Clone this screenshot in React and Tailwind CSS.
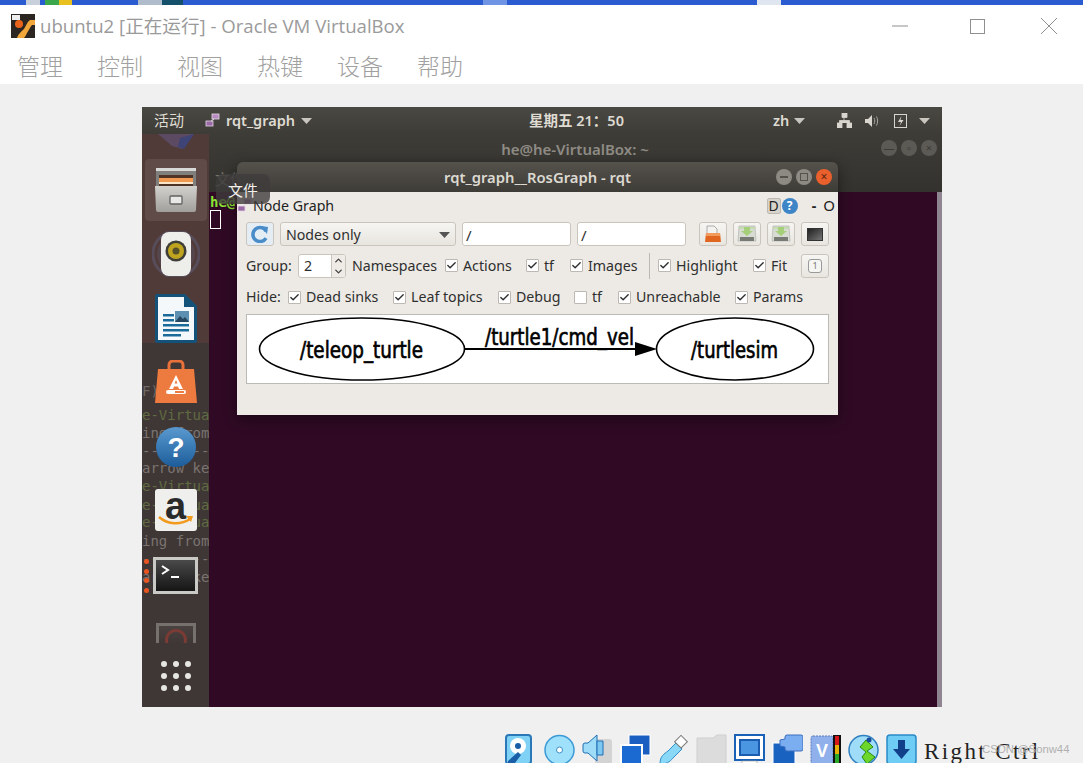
import { Check, ChevronDown, ChevronUp } from "lucide-react";

const ubuntu = "font-['Noto_Sans','Noto_Sans_CJK_SC',sans-serif]";
const mono = "font-['DejaVu_Sans_Mono','Liberation_Mono',monospace]";

const ghostLines = [
  ["F) (E", "text-[#6f6866]", 391],
  ["e-Virtua", "text-[#5f6b42]", 415],
  ["ing from", "text-[#7a7370]", 433],
  ["--------", "text-[#7a7370]", 451],
  ["arrow ke", "text-[#7a7370]", 468],
  ["e-Virtua", "text-[#5f6b42]", 486],
  ["e-Virtua", "text-[#5f6b42]", 505],
  ["e-Virtua", "text-[#5f6b42]", 522],
  ["ing from", "text-[#7a7370]", 541],
  ["--------", "text-[#7a7370]", 559],
  ["arrow ke", "text-[#7a7370]", 577],
];

function WinControls() {
  return (
    <div className="flex items-center gap-[56px] mr-[26px]">
      <svg width="22" height="16" viewBox="0 0 22 16"><path d="M0 8h16" stroke="#8f8f8f" strokeWidth="1" /></svg>
      <div className="w-[15px] h-[15px] border border-[#8f8f8f]" />
      <svg width="16" height="16" viewBox="0 0 16 16"><path d="M0 0l16 16M16 0L0 16" stroke="#8f8f8f" strokeWidth="1" /></svg>
    </div>
  );
}

function VBoxLogo() {
  return (
    <svg width="24" height="24" viewBox="0 0 24 24" className="shrink-0">
      <rect width="24" height="24" fill="#2b2622" />
      <path d="M6 24c1-4 4-6 7-9 2-3 3-7 6-9h5v5h-3c-2 2-3 5-5 8-1 2-2 4-3 5z" fill="#f2a73a" />
      <circle cx="8" cy="10" r="4" fill="#e8641c" />
      <rect x="1" y="1" width="8" height="5" fill="#eee" />
    </svg>
  );
}

function Caret({ color = "#c9c6bf" }) {
  return (
    <svg width="11" height="6" viewBox="0 0 11 6"><path d="M0 0h11L5.500 6z" fill={color} /></svg>
  );
}

function GraphGlyph() {
  return (
    <svg width="15" height="15" viewBox="0 0 15 15">
      <rect x="7" y="1" width="7" height="5" fill="#b78bc0" stroke="#e5d8e8" strokeWidth="0.800" />
      <rect x="1" y="8" width="7" height="5" fill="#9a6aa6" stroke="#e5d8e8" strokeWidth="0.800" />
      <path d="M6 8l3-2" stroke="#ddd" />
    </svg>
  );
}

function TopBar() {
  return (
    <div className={`h-[27px] shrink-0 flex items-center bg-gradient-to-b from-[#4a4843] to-[#3e3c37] text-[14.500px] font-semibold text-[#dfdbd2] ${ubuntu}`}>
      <span className="ml-[12px] w-[30px] text-[15px] font-normal whitespace-nowrap">活动</span>
      <span className="ml-[21px]"><GraphGlyph /></span>
      <span className="ml-[6px] w-[70px] whitespace-nowrap">rqt_graph</span>
      <span className="ml-[5px]"><Caret /></span>
      <span className="ml-[217px] w-[96px] whitespace-nowrap text-[14.500px]">星期五 21：50</span>
      <span className="ml-[148px] w-[16px]">zh</span>
      <span className="ml-[5px]"><Caret /></span>
      <svg className="ml-[32px]" width="15" height="15" viewBox="0 0 15 15">
        <path d="M5 0h5v4.500H5zM0 10h5v5H0zM10 10h5v5h-5zM7 4.500v3M2.500 10V7.500h10V10" fill="#d9d6cf" stroke="#d9d6cf" strokeWidth="0.800" />
      </svg>
      <svg className="ml-[13px]" width="15" height="14" viewBox="0 0 15 14">
        <path d="M0 5h3l4-4v12l-4-4H0z" fill="#d9d6cf" />
        <path d="M9 4c1 2 1 4 0 6M11.500 2.500c1.500 3 1.500 6 0 9" stroke="#a9a6a0" fill="none" />
      </svg>
      <svg className="ml-[14px]" width="13" height="15" viewBox="0 0 13 15">
        <rect x="0.500" y="1.500" width="12" height="13" fill="none" stroke="#d9d6cf" />
        <path d="M7.500 3L4 9h3l-1.500 4L9.500 7h-3z" fill="#d9d6cf" />
      </svg>
      <span className="ml-[12px]"><Caret /></span>
    </div>
  );
}

function DrawerIcon() {
  return (
    <svg width="42" height="44" viewBox="0 0 42 44">
      <defs>
        <linearGradient id="drawerFront" x1="0" y1="0" x2="0" y2="1">
          <stop offset="0" stopColor="#d2d1ce" />
          <stop offset="1" stopColor="#a09f9c" />
        </linearGradient>
      </defs>
      <rect x="1" y="0" width="40" height="20" rx="2" fill="#7f7f7d" />
      <rect x="1" y="0" width="40" height="3" fill="#d8d8d6" />
      <rect x="4" y="7" width="34" height="13" fill="#4f3426" />
      <rect x="4" y="10" width="34" height="6" fill="#ef9a50" />
      <rect x="4" y="14" width="34" height="2" fill="#f9e6c8" />
      <path d="M0 18h42l-1 24a2 2 0 0 1-2 2H3a2 2 0 0 1-2-2z" fill="url(#drawerFront)" />
      <rect x="15" y="28" width="12" height="8" rx="1" fill="#e8e8e6" stroke="#62615f" strokeWidth="1.300" />
    </svg>
  );
}

function SpeakerIcon() {
  return (
    <svg width="48" height="46" viewBox="0 0 48 46">
      <circle cx="24" cy="23" r="23" fill="none" stroke="#5c5870" strokeWidth="3" opacity="0.600" />
      <circle cx="24" cy="23" r="19" fill="#5c5870" opacity="0.400" />
      <rect x="9" y="1" width="30" height="44" rx="8" fill="#eeeeea" />
      <circle cx="24" cy="20" r="10.500" fill="#3f3f38" />
      <circle cx="24" cy="20" r="8" fill="#bfa51f" />
      <circle cx="24" cy="20" r="3.500" fill="#55502a" />
    </svg>
  );
}

function WriterIcon() {
  return (
    <svg width="42" height="49" viewBox="0 0 42 49">
      <path d="M2 0h28l12 12v35a2 2 0 0 1-2 2H2a2 2 0 0 1-2-2V2a2 2 0 0 1 2-2z" fill="#15527a" />
      <path d="M3 3h26l10 10v33H3z" fill="#f5f8fa" />
      <path d="M29 1l12 12H29z" fill="#15527a" />
      <rect x="8" y="20" width="11" height="2.500" fill="#1c6a9a" />
      <rect x="8" y="25" width="11" height="2.500" fill="#1c6a9a" />
      <rect x="8" y="30" width="26" height="2.500" fill="#1c6a9a" />
      <rect x="8" y="35" width="26" height="2.500" fill="#1c6a9a" />
      <rect x="8" y="40" width="18" height="2.500" fill="#1c6a9a" />
      <rect x="20" y="17" width="14" height="11" fill="#5d8fb0" />
      <path d="M20 28l5-6 3 3 2-2 4 5z" fill="#26455e" />
    </svg>
  );
}

function BagIcon() {
  return (
    <svg width="42" height="43" viewBox="0 0 42 43">
      <path d="M14 10V5a4 4 0 0 1 4-4h6a4 4 0 0 1 4 4v5" fill="none" stroke="#e8703a" strokeWidth="3" />
      <path d="M3 9h36l3 34H0z" fill="#ed7a3f" />
      <path d="M21 15l7 14h-4l-1-2.500h-4L18 29h-4zM19.500 23.500h3L21 20z" fill="#fff" fillRule="evenodd" />
      <rect x="11" y="30" width="20" height="4" rx="2" fill="#fff" />
      <rect x="20" y="31" width="9" height="2" fill="#ed7a3f" />
    </svg>
  );
}

function HelpIcon() {
  return (
    <svg width="40" height="40" viewBox="0 0 40 40">
      <defs>
        <linearGradient id="helpBlue" x1="0" y1="0" x2="0" y2="1">
          <stop offset="0" stopColor="#5a9ad0" />
          <stop offset="1" stopColor="#1c5c9a" />
        </linearGradient>
      </defs>
      <circle cx="20" cy="20" r="20" fill="url(#helpBlue)" />
      <text x="20" y="30" textAnchor="middle" fontSize="28" fontWeight="700" fill="#fff" fontFamily="Liberation Sans, sans-serif">?</text>
    </svg>
  );
}

function AmazonIcon() {
  return (
    <div className="w-[42px] h-[42px] rounded-[3px] bg-[#efefed] flex flex-col items-center relative overflow-hidden">
      <span className="text-[38px] leading-[34px] font-bold text-[#2a2a2a] font-['Liberation_Sans',sans-serif]">a</span>
      <svg className="absolute left-[3px] bottom-[4px]" width="36" height="12" viewBox="0 0 36 12">
        <path d="M1 2c9 8 22 8 31 2" fill="none" stroke="#f29a1e" strokeWidth="2.500" />
        <path d="M28 1l7 0-2 6z" fill="#f29a1e" />
      </svg>
    </div>
  );
}

function TerminalIcon() {
  return (
    <div className="w-[45px] h-[37px] bg-[#c9c9c6] p-[3px]">
      <div className="w-full h-full bg-gradient-to-b from-[#4a4a4a] to-[#161616] relative">
        <svg width="25" height="18" viewBox="0 0 25 18" className="absolute left-[5px] top-[4px]">
          <path d="M1 2l6 4-6 4" fill="none" stroke="#fff" strokeWidth="2" />
          <path d="M10 13h8" stroke="#fff" strokeWidth="2" />
        </svg>
      </div>
    </div>
  );
}

function Launcher() {
  const dots = [0, 1, 2, 3, 4, 5, 6, 7, 8];
  return (
    <div className="w-[67px] h-full shrink-0 relative overflow-hidden bg-[#3f3735]">
      <div className="absolute inset-x-0 top-0 h-[209px] bg-[#503b38]" />
      {ghostLines.map(([text, color, y], i) => (
        <div
          key={i}
          className={`absolute left-0 text-[14px] leading-[18px] whitespace-pre ${mono} ${color}`}
          style={{ top: y - 134 - 9 }}
        >
          {text}
        </div>
      ))}
      <div className="relative flex flex-col items-center">
        <svg width="44" height="16" viewBox="0 0 44 16">
          <path d="M4 0h36l-12 15-10-3z" fill="#5b4a62" />
          <path d="M26 4l14-4-10 15-6-2z" fill="#3e4476" />
        </svg>
        <div className="mt-[9px] w-[62px] h-[62px] rounded-[4px] bg-[#614b48] flex items-center justify-center">
          <DrawerIcon />
        </div>
        <div className="mt-[10px]"><SpeakerIcon /></div>
        <div className="mt-[17px]"><WriterIcon /></div>
        <div className="mt-[17px]"><BagIcon /></div>
        <div className="mt-[24px]"><HelpIcon /></div>
        <div className="mt-[22px]"><AmazonIcon /></div>
        <div className="mt-[26px] relative">
          <TerminalIcon />
          <div className="absolute left-[-9px] top-[2px] flex flex-col gap-[4.500px]">
            <span className="w-[5px] h-[5px] rounded-full bg-[#e95420]" />
            <span className="w-[5px] h-[5px] rounded-full bg-[#e95420]" />
            <span className="w-[5px] h-[5px] rounded-full bg-[#e95420]" />
            <span className="w-[5px] h-[5px] rounded-full bg-[#e95420]" />
          </div>
        </div>
        <div className="mt-[29px] w-[40px] h-[20px] border-[3px] border-b-0 border-[#77716e] bg-gradient-to-b from-[#4a4240] to-[#3f3735] flex justify-center overflow-hidden">
          <div className="w-[22px] h-[22px] mt-[3px] rounded-full border-[3px] border-[#7a3b34] shrink-0" />
        </div>
        <div className="mt-[18px] grid grid-cols-3 gap-x-[6px] gap-y-[6px]">
          {dots.map((d) => (
            <span key={d} className="w-[6px] h-[6px] rounded-full bg-[#e8e6e3]" />
          ))}
        </div>
      </div>
    </div>
  );
}

function DimButtons() {
  return (
    <div className="flex gap-[4px] mr-[5px] mt-[6px]">
      {["—", "▫", "×"].map((c) => (
        <span key={c} className="w-[16px] h-[16px] rounded-full bg-[#5c5a55] text-[#3d3b37] text-[11px] leading-[16px] text-center">
          {c}
        </span>
      ))}
    </div>
  );
}

function TerminalWindow() {
  return (
    <div className="flex-1 flex flex-col min-w-0">
      <div className="h-[58px] shrink-0 bg-gradient-to-b from-[#3e3c37] to-[#34322e] flex items-start relative">
        <div className={`flex-1 text-center pl-[60px] mt-[4px] text-[15px] font-semibold text-[#8f8c85] ${ubuntu}`}>
          he@he-VirtualBox: ~
        </div>
        <DimButtons />
        <span className={`absolute left-[6px] top-[34px] text-[15px] text-[#77746d] ${ubuntu}`}>文件</span>
      </div>
      <div className="flex-1 flex bg-[#300a24]">
        <div className={`flex-1 text-[14px] leading-[16px] pt-[2px] pl-[1px] ${mono}`}>
          <div className="font-bold text-[#8ae234]">he@</div>
          <div className="w-[11px] h-[19px] border border-white" />
        </div>
        <div className="w-[5px] bg-[#8f8590]" />
      </div>
    </div>
  );
}

function Box({ checked = true }) {
  return (
    <span className="w-[13px] h-[13px] shrink-0 bg-white border border-[#bdb9b2] rounded-[1px] flex items-center justify-center">
      {checked && <Check size={11} strokeWidth={3} className="text-[#2e2e2e]" />}
    </span>
  );
}

function CheckItem({ label, width, checked }) {
  return (
    <span className="flex items-center gap-[5px] whitespace-nowrap" style={{ width }}>
      <Box checked={checked} />
      <span className="pb-px">{label}</span>
    </span>
  );
}

function ToolButton({ children, className = "" }) {
  return (
    <span className={`w-[28px] h-[24px] shrink-0 rounded-[3px] border border-[#c9c5bd] bg-gradient-to-b from-[#f6f5f2] to-[#e9e6e0] flex items-center justify-center ${className}`}>
      {children}
    </span>
  );
}

function SaveGlyph() {
  return (
    <svg width="20" height="18" viewBox="0 0 20 18">
      <path d="M2 1h16l1 15H1z" fill="#d7dbd4" stroke="#a9aca6" strokeWidth="0.600" />
      <path d="M2 2h16v2H2z" fill="#c5dcae" />
      <path d="M7 2h6v4h3l-6 5-6-5h3z" fill="#a5cf78" />
      <rect x="3" y="12" width="14" height="4" fill="#777a75" />
    </svg>
  );
}

function GraphView() {
  return (
    <div className="h-[70px] mx-[9px] mt-[7px] bg-white border border-[#bcbab5]">
      <svg width="581" height="68" viewBox="247 315 581 68">
        <ellipse cx="362" cy="349" rx="102.500" ry="31" fill="none" stroke="#000" strokeWidth="1.600" />
        <ellipse cx="735" cy="349" rx="78.500" ry="31" fill="none" stroke="#000" strokeWidth="1.600" />
        <path d="M465 349h172" stroke="#000" strokeWidth="2" />
        <path d="M635 342l22 7-22 7z" fill="#000" />
        <g fontFamily="DejaVu Sans, sans-serif" fontSize="23" fill="#000" stroke="#000" strokeWidth="0.700">
          <text x="300" y="358" textLength="123" lengthAdjust="spacingAndGlyphs">/teleop_turtle</text>
          <text x="485" y="345" textLength="149" lengthAdjust="spacingAndGlyphs">/turtle1/cmd_vel</text>
          <text x="691" y="358" textLength="87" lengthAdjust="spacingAndGlyphs">/turtlesim</text>
        </g>
      </svg>
    </div>
  );
}

function RqtWindow() {
  return (
    <div className={`absolute left-[95px] top-[55px] w-[601px] h-[253px] flex flex-col shadow-[0_4px_14px_rgba(0,0,0,0.450)] rounded-t-[6px] overflow-hidden text-[14.200px] text-[#2f2f2f] ${ubuntu}`}>
      <div className="h-[30px] shrink-0 bg-gradient-to-b from-[#55524c] to-[#3e3c37] flex items-center">
        <span className="flex-1 text-center pl-[62px] text-[14.800px] font-semibold text-[#dcd9d1]">rqt_graph__RosGraph - rqt</span>
        <div className="flex gap-[4px] mr-[6px]">
          <span className="w-[16px] h-[16px] rounded-full bg-[#8d8a83] flex items-center justify-center"><span className="w-[8px] h-[2px] bg-[#55524c]" /></span>
          <span className="w-[16px] h-[16px] rounded-full bg-[#8d8a83] flex items-center justify-center"><span className="w-[8px] h-[8px] border border-[#55524c]" /></span>
          <span className="w-[16px] h-[16px] rounded-full bg-[#e9602c] flex items-center justify-center text-[12px] leading-none text-[#5a2410]">×</span>
        </div>
      </div>
      <div className="flex-1 bg-[#edeae5] flex flex-col">
        <div className="h-[30px] flex items-center pb-[3px]">
          <span className="w-[16px] shrink-0"><GraphGlyph /></span>
          <span className="text-[#222]">Node Graph</span>
          <span className="ml-auto w-[14px] h-[16px] bg-[#d8d4cc] border border-[#bdb9b2] rounded-[2px] text-[14px] leading-[14px] text-center text-[#222]">D</span>
          <span className="w-[16px] h-[16px] ml-[1px] rounded-full bg-[#3d85c6] text-white text-[12px] leading-[16px] text-center font-bold">?</span>
          <span className="ml-[14px] font-bold text-[#222]">-</span>
          <span className="ml-[7px] mr-[3px] text-[15px] text-[#222]">O</span>
        </div>
        <div className="flex items-center pl-[9px] h-[24px]">
          <ToolButton className="bg-none bg-[#e4ecf4]">
            <svg width="18" height="18" viewBox="0 0 18 18">
              <path d="M15 6a7 7 0 1 0 0 7" fill="none" stroke="#4a8cc8" strokeWidth="3.500" />
              <path d="M10 1l7 1-1 7z" fill="#4a8cc8" />
            </svg>
          </ToolButton>
          <span className="ml-[6px] w-[176px] h-[24px] rounded-[3px] border border-[#c9c5bd] bg-gradient-to-b from-[#f6f5f2] to-[#e8e5df] flex items-center pt-[2px] px-[5px] justify-between">
            Nodes only
            <Caret color="#555" />
          </span>
          <span className="ml-[6px] w-[109px] h-[24px] rounded-[3px] border border-[#c9c5bd] bg-white pl-[3px] leading-[24px] text-[15px]">/</span>
          <span className="ml-[6px] w-[109px] h-[24px] rounded-[3px] border border-[#c9c5bd] bg-white pl-[3px] leading-[24px] text-[15px]">/</span>
          <ToolButton className="ml-[13px]">
            <svg width="18" height="18" viewBox="0 0 18 18">
              <path d="M3 1h7l3 3v5H3z" fill="#f4f2ee" stroke="#999" strokeWidth="0.800" />
              <path d="M2 8h14l1 9H1z" fill="#e0651f" />
              <path d="M2 8h14v3H2z" fill="#f29a5b" />
            </svg>
          </ToolButton>
          <ToolButton className="ml-[6px]"><SaveGlyph /></ToolButton>
          <ToolButton className="ml-[6px]"><SaveGlyph /></ToolButton>
          <ToolButton className="ml-[6px]">
            <span className="w-[16px] h-[13px] bg-gradient-to-br from-[#222] to-[#777] border border-[#333]" />
          </ToolButton>
        </div>
        <div className="flex items-center pl-[9px] h-[24px] mt-[8px] relative">
          <span className="w-[52px] pb-px">Group:</span>
          <span className="w-[48px] h-[24px] rounded-[3px] border border-[#c9c5bd] bg-white flex items-center justify-between overflow-hidden">
            <span className="pl-[5px]">2</span>
            <span className="w-[14px] h-full border-l border-[#c9c5bd] bg-[#efece7] flex flex-col items-center justify-center text-[#444]">
              <ChevronUp size={11} strokeWidth={3} />
              <ChevronDown size={11} strokeWidth={3} />
            </span>
          </span>
          <span className="ml-[6px] w-[93px] pb-px whitespace-nowrap">Namespaces</span>
          <CheckItem label="Actions" width={81} />
          <CheckItem label="tf" width={44} />
          <CheckItem label="Images" width={79} />
          <span className="w-px h-[26px] bg-[#bdb9b2]" />
          <span className="w-[8px]" />
          <CheckItem label="Highlight" width={95} />
          <CheckItem label="Fit" width={48} />
          <ToolButton>
            <span className="w-[14px] h-[14px] rounded-[3px] border border-[#999] bg-[#f5f5f2] text-[9px] leading-[12px] text-center text-[#777]">1</span>
          </ToolButton>
        </div>
        <div className="flex items-center pl-[9px] h-[20px] mt-[9px]">
          <span className="w-[42px] pb-px">Hide:</span>
          <CheckItem label="Dead sinks" width={105} />
          <CheckItem label="Leaf topics" width={105} />
          <CheckItem label="Debug" width={76} />
          <CheckItem label="tf" width={44} checked={false} />
          <CheckItem label="Unreachable" width={117} />
          <CheckItem label="Params" width={70} />
        </div>
        <GraphView />
      </div>
    </div>
  );
}

function VMScreen() {
  return (
    <div className="ml-[142px] mt-[23px] w-[800px] h-[600px] flex flex-col relative overflow-hidden">
      <TopBar />
      <div className="flex-1 flex min-h-0">
        <Launcher />
        <TerminalWindow />
      </div>
      <RqtWindow />
      <span className={`absolute left-[74px] top-[67px] w-[54px] h-[30px] rounded-[7px] bg-[#3e3c3c]/80 text-[15px] leading-[32px] text-center text-[#f2f0ec] ${ubuntu}`}>
        文件
      </span>
    </div>
  );
}

function StatusIcons() {
  return (
    <div className="flex items-start gap-[7px] h-[29px] overflow-hidden">
      <svg width="27" height="30" viewBox="0 0 27 30">
        <rect x="1" y="1" width="25" height="29" rx="3" fill="#7fd2f5" stroke="#2a78b8" strokeWidth="2" />
        <circle cx="13" cy="12" r="8" fill="#fff" />
        <circle cx="13" cy="12" r="3" fill="#1a5ea8" />
        <path d="M3 27l10-9 3 3-6 8H3z" fill="#1a5ea8" />
      </svg>
      <svg className="ml-[5px]" width="31" height="30" viewBox="0 0 31 30">
        <circle cx="15.500" cy="16" r="14.500" fill="#9fe0fa" stroke="#3a9ad6" strokeWidth="1.500" />
        <circle cx="15.500" cy="16" r="3" fill="#fff" stroke="#3a8fc8" />
      </svg>
      <svg width="31" height="30" viewBox="0 0 31 30">
        <rect x="13" y="5" width="17" height="25" rx="3" fill="#d3d3d3" />
        <path d="M3 9h3l9-8v26l-9-8H3a2 2 0 0 1-2-2v-6a2 2 0 0 1 2-2z" fill="#9fdcf8" stroke="#1f6fb5" />
        <path d="M15 7h6v14h-6z" fill="#7cc8f0" stroke="#1f6fb5" />
      </svg>
      <svg width="31" height="30" viewBox="0 0 31 30">
        <rect x="9" y="1" width="21" height="20" fill="#1a5ec2" stroke="#fff" />
        <rect x="1" y="11" width="21" height="19" fill="#1a6ad2" stroke="#fff" strokeWidth="2" />
      </svg>
      <svg width="31" height="30" viewBox="0 0 31 30">
        <path d="M2 30c0-8 4-10 8-13l8-8 6 6-8 8c-3 3-5 7-14 7" fill="#8ad8f8" stroke="#2f8ecb" />
        <rect x="19" y="3" width="9" height="9" transform="rotate(45 23 7)" fill="#fff" stroke="#777" />
      </svg>
      <svg width="31" height="30" viewBox="0 0 31 30">
        <path d="M1 30V4h16l4-3h9v29z" fill="#dcdcdc" stroke="#cfcfcf" />
      </svg>
      <svg width="31" height="30" viewBox="0 0 31 30">
        <rect x="1" y="1" width="29" height="25" fill="#fff" stroke="#1a62b8" strokeWidth="2" />
        <rect x="6" y="6" width="19" height="15" fill="#4a96e0" stroke="#1a5cb0" strokeWidth="2" />
        <rect x="8" y="27" width="15" height="3" fill="#fff" stroke="#999" strokeWidth="0.600" />
      </svg>
      <svg width="31" height="30" viewBox="0 0 31 30">
        <rect x="1" y="9" width="22" height="21" fill="#1a62c0" stroke="#fff" />
        <path d="M8 6l5-1V3a2 2 0 0 1 2-2h14a2 2 0 0 1 2 2v12a2 2 0 0 1-2 2H15a2 2 0 0 1-2-2v-2l-5-1z" fill="#7aaef0" stroke="#3a6ec0" />
      </svg>
      <svg width="31" height="30" viewBox="0 0 31 30">
        <rect x="1" y="2" width="22" height="28" rx="2" fill="#8fb0ea" stroke="#5a7cc0" strokeDasharray="2 1" />
        <text x="12" y="23" textAnchor="middle" fontSize="18" fontWeight="700" fill="#fff" fontFamily="Liberation Sans, sans-serif">V</text>
        <rect x="23" y="1" width="8" height="29" fill="#111" />
        <rect x="25" y="2" width="4" height="9" fill="#d81818" />
        <rect x="25" y="11" width="4" height="9" fill="#e8b000" />
        <rect x="25" y="20" width="4" height="10" fill="#2aa82a" />
      </svg>
      <svg width="31" height="30" viewBox="0 0 31 30">
        <circle cx="15.500" cy="16" r="14.500" fill="#9fdcf8" stroke="#2f80c0" strokeWidth="1.500" />
        <path d="M18 6l7 7-6 4 8 6-8 7-5-7 4-5-6-5z" fill="#6dd62a" stroke="#2a8a10" />
        <circle cx="21" cy="6" r="2.500" fill="#1a4a9a" />
      </svg>
      <svg width="31" height="30" viewBox="0 0 31 30">
        <rect x="1" y="1" width="29" height="29" rx="3" fill="#6fcdf5" stroke="#2a8ac8" strokeWidth="1.500" />
        <path d="M12 6h7v9h5l-8.500 10L7 15h5z" fill="#123f8a" />
      </svg>
    </div>
  );
}

export default function App() {
  return (
    <div className="w-[1083px] h-[763px] bg-[#f0f0f0] overflow-hidden flex flex-col relative">
      <div className="h-[5px] shrink-0 bg-[#2a5bd0] flex">
        <span className="ml-[26px] w-[14px] bg-[#c8d0dc]" />
        <span className="ml-[5px] w-[14px] bg-[#3aa84a]" />
        <span className="w-[13px] bg-[#e8c020]" />
        <span className="ml-[66px] w-[24px] bg-[#b0bccc]" />
        <span className="w-[21px] bg-[#14506a]" />
        <span className="ml-[300px] w-[24px] bg-[#6f94e4]" />
        <span className="ml-[250px] w-[24px] bg-[#dfe6f0]" />
      </div>
      <div className="h-[40px] shrink-0 bg-white flex items-center pl-[11px] pt-[2px]">
        <VBoxLogo />
        <span className="ml-[5px] text-[18.600px] text-[#9a9a9a] whitespace-nowrap font-['Open_Sans','Noto_Sans_CJK_SC',sans-serif]">
          ubuntu2 [正在运行] - Oracle VM VirtualBox
        </span>
        <span className="ml-auto"><WinControls /></span>
      </div>
      <div className="h-[39px] shrink-0 bg-white flex items-start pl-[17px] gap-[34px] text-[23px] leading-[41px] text-[#a0a0a0] font-['Noto_Sans_CJK_SC',sans-serif] font-light">
        {["管理", "控制", "视图", "热键", "设备", "帮助"].map((m) => (
          <span key={m}>{m}</span>
        ))}
      </div>
      <VMScreen />
      <div className="mt-auto h-[29px] flex items-start pl-[505px] overflow-hidden">
        <StatusIcons />
        <span className="ml-[7px] text-[23px] leading-[36px] tracking-[2.400px] text-[#222] whitespace-nowrap font-['Liberation_Serif',serif]">Right Ctrl</span>
      </div>
      <span className="absolute left-[982px] top-[741px] text-[11.300px] text-[#b0b0b0] whitespace-nowrap font-['Liberation_Sans',sans-serif]">CSDN @Sonw44</span>
    </div>
  );
}
